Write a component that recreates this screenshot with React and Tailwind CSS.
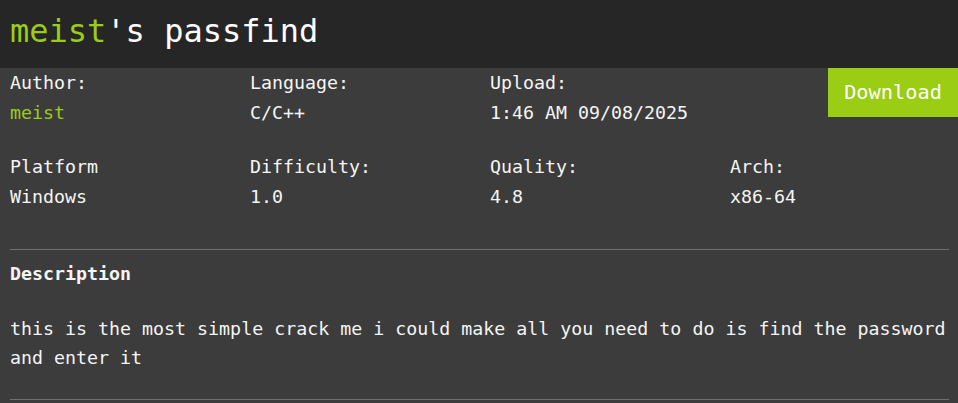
import React from "react";

const mono = "font-['Consolas','DejaVu_Sans_Mono',monospace]";

function Field({ label, value, green }) {
  return (
    <div className="flex flex-col">
      <span className="leading-[30px]">{label}</span>
      <span className={`leading-[30px] ${green ? "text-[#9acd14]" : ""}`}>{value}</span>
    </div>
  );
}

export default function App() {
  return (
    <div className={`${mono} min-h-[403px] bg-[#3c3c3c] text-[18.3px] text-[#f5f5f5]`}>
      {/* Header */}
      <header className="h-[68px] bg-[#262626] pl-[10px] flex items-center">
        <h1 className="text-[32px] leading-none text-white -mt-[6px]">
          <span className="text-[#9acd14]">meist</span>'s passfind
        </h1>
      </header>

      <div className="pl-[10px]">
        {/* Info grid */}
        <div className="grid grid-cols-[240px_240px_240px_1fr]">
          <Field label="Author:" value="meist" green />
          <Field label="Language:" value="C/C++" />
          <Field label="Upload:" value="1:46 AM 09/08/2025" />
          <div className="flex justify-end items-start">
            <button className="h-[49px] w-[130px] bg-[#9acd14] text-white text-[20.3px] leading-none">
              Download
            </button>
          </div>
        </div>

        <div className="grid grid-cols-[240px_240px_240px_1fr] mt-[24px]">
          <Field label="Platform" value="Windows" />
          <Field label="Difficulty:" value="1.0" />
          <Field label="Quality:" value="4.8" />
          <Field label="Arch:" value="x86-64" />
        </div>

        <hr className="mt-[37px] mr-[9px] border-0 border-t border-[#6f6f6f]" />

        <h2 className="font-bold leading-[30px] mt-[9px]">Description</h2>

        <p className="leading-[29px] mt-[25px] pr-[9px]">
          this is the most simple crack me i could make all you need to do is find the password and enter it
        </p>

        <hr className="mt-[27px] mr-[9px] border-0 border-t border-[#6f6f6f]" />
      </div>
    </div>
  );
}
